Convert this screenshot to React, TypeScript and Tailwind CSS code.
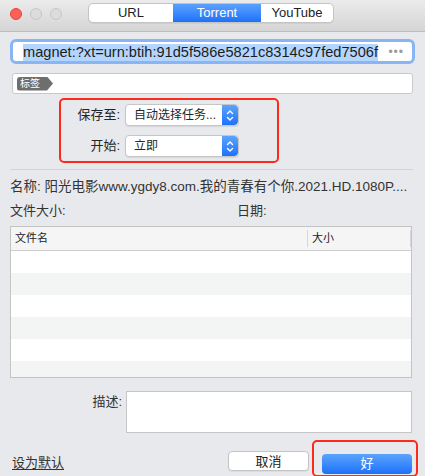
const font = { fontFamily: '"Liberation Sans", "Noto Sans CJK SC", sans-serif' };

const Stepper = () => (
  <div className="w-[16px] h-full rounded-r-[4px] bg-gradient-to-b from-[#5ba3fd] to-[#1b72fb] flex items-center justify-center">
    <svg width="8" height="13" viewBox="0 0 8 13" fill="none" stroke="white" strokeWidth="1.4" strokeLinecap="round" strokeLinejoin="round">
      <path d="M1.5 4.5 L4 2 L6.5 4.5" />
      <path d="M1.5 8.5 L4 11 L6.5 8.5" />
    </svg>
  </div>
);

const Select = ({ value }: { value: string }) => (
  <div className="w-[114px] h-[22px] flex items-stretch rounded-[4px] border border-[#c6c6c6] bg-white shadow-[0_1px_1px_rgba(0,0,0,0.08)] overflow-hidden">
    <div className="flex-1 pl-[8px] flex items-center text-[12px] text-[#262626] whitespace-nowrap">{value}</div>
    <Stepper />
  </div>
);

export default function App() {
  const rows = [0, 1, 2, 3, 4, 5];
  return (
    <div style={font} className="w-[425px] h-[476px] bg-[#e8e9ed] flex flex-col overflow-hidden text-[#262626]">
      {/* title bar */}
      <div className="h-[32px] shrink-0 flex items-start pl-[10px] pt-[3px] border-b border-[#bdbdbd] bg-gradient-to-b from-[#ebebeb] to-[#d5d5d5]">
        <div className="flex gap-[8px] mt-[5px]">
          <span className="w-[12px] h-[12px] rounded-full bg-[#fe5f57] border border-[#e1463f]" />
          <span className="w-[12px] h-[12px] rounded-full bg-[#dcdcdc] border border-[#c6c6c6]" />
          <span className="w-[12px] h-[12px] rounded-full bg-[#dcdcdc] border border-[#c6c6c6]" />
        </div>
        <div className="ml-[26px] flex h-[20px] rounded-[5px] border border-[#c4c4c4] bg-white overflow-hidden text-[13px] shadow-[0_1px_0_rgba(0,0,0,0.05)]">
          <div className="w-[84px] flex items-center justify-center text-[#222]">URL</div>
          <div className="w-[88px] flex items-center justify-center text-white bg-gradient-to-b from-[#5aa1fd] to-[#1b71fa]">Torrent</div>
          <div className="w-[72px] flex items-center justify-center text-[#222]">YouTube</div>
        </div>
      </div>

      <div className="flex flex-col px-[10px]">
        {/* magnet input */}
        <div className="mt-[7px] h-[25px] rounded-[6px] border-[3px] border-[#8ab5f4] bg-white flex items-center pl-[10px] pr-[8px]">
          <div className="flex-1 overflow-hidden whitespace-nowrap">
            <span className="bg-[#b4d6fe] text-[14.6px] leading-[17px] inline-block text-[#1c1c1c]">magnet:?xt=urn:btih:91d5f586e5821c8314c97fed7506f</span>
          </div>
          <span className="ml-[6px] text-[#9b9b9b] text-[12px] tracking-[1px]">•••</span>
        </div>

        {/* tags */}
        <div className="mt-[9px] mx-[2px] h-[21px] rounded-[3px] border border-[#c9c9c9] bg-white flex items-center pl-[4px]">
          <span className="h-[14px] w-[36px] pl-[3px] rounded-l-[3px] bg-[#6e6e6e] text-white text-[10px] leading-[14px] [clip-path:polygon(0_0,calc(100%_-_6px)_0,100%_50%,calc(100%_-_6px)_100%,0_100%)]">
            标签
          </span>
        </div>

        {/* save/start box */}
        <div className="mt-[4px] ml-[49px] w-[220px] rounded-[5px] border-2 border-[#fe2b1c] flex flex-col gap-[9px] pt-[4px] pb-[4px]">
          <div className="flex items-center">
            <span className="w-[60px] text-right text-[13px] pr-[1px]">保存至:</span>
            <div className="ml-[4px]"><Select value="自动选择任务..." /></div>
          </div>
          <div className="flex items-center">
            <span className="w-[60px] text-right text-[13px] pr-[1px]">开始:</span>
            <div className="ml-[4px]"><Select value="立即" /></div>
          </div>
        </div>

        <div className="mt-[6px] mr-[2px] h-px bg-[#d2d3d6]" />

        <div className="mt-[8px] text-[13.5px] leading-[18px] text-[#333] whitespace-nowrap">
          名称: 阳光电影www.ygdy8.com.我的青春有个你.2021.HD.1080P....
        </div>
        <div className="mt-[6px] flex text-[13px] leading-[18px] text-[#333]">
          <span className="w-[227px]">文件大小:</span>
          <span>日期:</span>
        </div>

        {/* file table */}
        <div className="mt-[6px] mr-[3px] h-[152px] border border-[#c4c4c4] bg-white overflow-hidden flex flex-col">
          <div className="h-[24px] shrink-0 flex items-center bg-[#f5f5f5] border-b border-[#cfcfcf] text-[11px] text-[#222]">
            <span className="w-[296px] pl-[4px]">文件名</span>
            <span className="w-px h-[17px] bg-[#d6d6d6]" />
            <span className="flex-1 pl-[4px]">大小</span>
            <span className="w-px h-[17px] bg-[#d6d6d6]" />
          </div>
          {rows.map((r) => (
            <div key={r} className={`h-[22px] shrink-0 ${r % 2 === 1 ? 'bg-[#f3f4f4]' : 'bg-white'}`} />
          ))}
        </div>

        {/* description */}
        <div className="mt-[13px] flex items-start">
          <span className="w-[112px] pt-[2px] text-right text-[13px] leading-[18px] text-[#333]">描述:</span>
          <div className="ml-[4px] w-[286px] h-[42px] border border-[#c6c6c6] bg-white" />
        </div>

        {/* footer */}
        <div className="mt-[18px] flex items-center">
          <span className="ml-[2px] text-[13px] underline underline-offset-2 text-[#333]">设为默认</span>
          <div className="ml-auto mr-[3px] flex gap-[13px]">
            <button className="w-[81px] h-[20px] rounded-[4px] border border-[#c4c4c4] bg-white text-[13px] text-[#222] shadow-[0_1px_1px_rgba(0,0,0,0.06)]">
              取消
            </button>
            <div className="relative">
              <button className="w-[90px] h-[20px] rounded-[4px] bg-gradient-to-b from-[#5ba3fd] to-[#1a70fa] text-white text-[13px]">
                好
              </button>
              <div className="absolute -left-[10px] -right-[6px] -top-[11px] -bottom-[2px] border-2 border-[#fe2b1c] rounded-[5px]" />
            </div>
          </div>
        </div>
      </div>
    </div>
  );
}
